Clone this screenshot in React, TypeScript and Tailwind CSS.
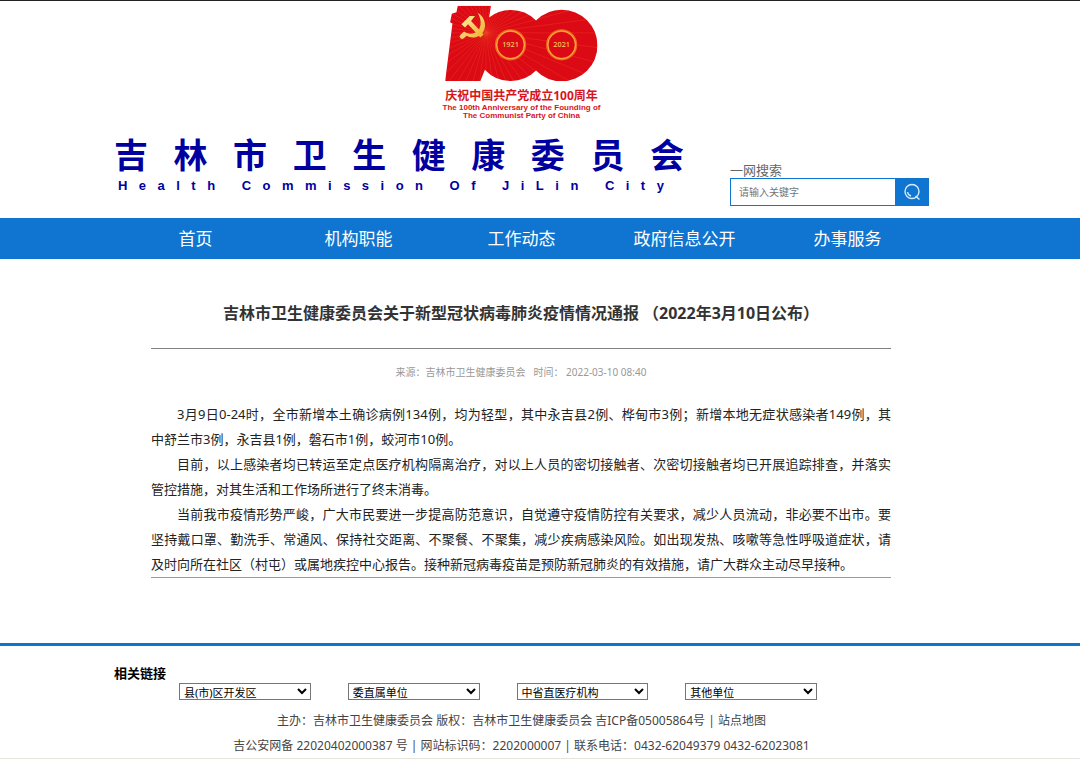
import type { ReactNode } from "react";

const NAV_ITEMS = ["首页", "机构职能", "工作动态", "政府信息公开", "办事服务"];

const LINK_GROUPS = ["县(市)区开发区", "委直属单位", "中省直医疗机构", "其他单位"];

// \u2060 keeps a place name and the character before it on one line.
const PARAGRAPHS = [
  "3月9日0-24时，全市新增本土确诊病例134例，均为轻型，其中永吉县2例、桦甸市3例；新增本地无症状感染者149例，其中\u2060舒兰市3例，永吉县1例，磐石市1例，蛟河市10例。",
  "目前，以上感染者均已转运至定点医疗机构隔离治疗，对以上人员的密切接触者、次密切接触者均已开展追踪排查，并落实管控措施，对其生活和工作场所进行了终末消毒。",
  "当前我市疫情形势严峻，广大市民要进一步提高防范意识，自觉遵守疫情防控有关要求，减少人员流动，非必要不出市。要坚持戴口罩、勤洗手、常通风、保持社交距离、不聚餐、不聚集，减少疾病感染风险。如出现发热、咳嗽等急性呼吸道症状，请及时向所在社区（村屯）或属地疾控中心报告。接种新冠病毒疫苗是预防新冠肺炎的有效措施，请广大群众主动尽早接种。",
];

const RAYS = Array.from({ length: 48 }, (_, i) => {
  const a = (i * Math.PI * 2) / 48;
  return { x: 165 + Math.cos(a) * 400, y: 100 + Math.sin(a) * 400 };
});

function Container({ className = "", children }: { className?: string; children: ReactNode }) {
  return <div className={`mx-auto w-full max-w-[815px] ${className}`}>{children}</div>;
}

// Spreads single characters evenly over the available width.
function Spread({ text, className }: { text: string; className: string }) {
  return (
    <span className={`flex justify-between whitespace-pre ${className}`}>
      {Array.from(text).map((ch, i) => (
        <span key={i}>{ch}</span>
      ))}
    </span>
  );
}

function AnniversaryLogo() {
  return (
    <div className="flex flex-col items-center text-[#d8141c]">
      <svg viewBox="42 16 460 232" className="h-[77px] w-[153px]" aria-hidden="true">
        <defs>
          <clipPath id="hundred">
            <path d="M80 18H180L174 56L166 200L148 245H42L64 72L57 68L62 42L76 38Z" />
            <circle cx="240" cy="138" r="107" />
            <circle cx="393" cy="138" r="108" />
          </clipPath>
          <linearGradient id="gold" x1="0" y1="0" x2="1" y2="1">
            <stop offset="0" stopColor="#fff0a0" />
            <stop offset="1" stopColor="#edb02c" />
          </linearGradient>
        </defs>
        <g clipPath="url(#hundred)">
          <rect x="40" y="14" width="464" height="236" fill="#dc0a14" />
          {RAYS.map((r, i) => (
            <line key={i} x1="165" y1="100" x2={r.x} y2={r.y} stroke="#ef4a2c" strokeWidth="2" opacity="0.5" />
          ))}
        </g>
        {[239, 393].map((cx) => (
          <g key={cx}>
            <circle cx={cx} cy="136" r="43" fill="#dc0a14" stroke="#ef6a1c" strokeWidth="8" />
            <circle cx={cx} cy="136" r="42" fill="none" stroke="#fbb04a" strokeWidth="3" />
            <text
              x={cx}
              y="144"
              textAnchor="middle"
              fill="#f7c860"
              className="font-['Noto_Sans'] text-[22px] font-medium"
            >
              {cx === 239 ? "1921" : "2021"}
            </text>
          </g>
        ))}
        <g fill="url(#gold)">
          <path d="M140 39C164 52 170 86 151 104C138 116 119 117 107 109L98 116A7 7 0 1 1 88 106L99 96C112 106 132 104 142 92C153 78 150 56 140 39Z" />
          <path d="M91 74L116 49H132L120 64L158 105L148 114L111 74L102 84Z" />
        </g>
      </svg>
      <p className="mt-1.5 text-xs leading-4 font-bold whitespace-nowrap">庆祝中国共产党成立100周年</p>
      <p className="text-center font-['Liberation_Sans'] text-[8px] leading-[8px] font-bold whitespace-nowrap">
        The 100th Anniversary of the Founding of
        <br />
        The Communist Party of China
      </p>
    </div>
  );
}

function SearchBox() {
  return (
    <form className="w-[199px]" onSubmit={(e) => e.preventDefault()}>
      <label htmlFor="keyword" className="block text-[13px] leading-4 text-[#666]">
        一网搜索
      </label>
      <div className="flex h-7 border border-[#0f75d0]">
        <input
          id="keyword"
          type="text"
          placeholder="请输入关键字"
          className="min-w-0 flex-1 px-2 text-[10px] outline-none placeholder:text-[#757575]"
        />
        <button type="submit" aria-label="搜索" className="flex w-[33px] items-center justify-center bg-[#0f75d0]">
          <svg viewBox="0 0 18 18" className="size-[18px]" fill="none" stroke="#d9ebfa" strokeWidth="1.4">
            <circle cx="9" cy="8.5" r="7" />
            <path d="M4.5 9A5 5 0 0 0 8 13M12.5 13L16.5 16.5" />
          </svg>
        </button>
      </div>
    </form>
  );
}

export default function App() {
  return (
    <div className="border-t border-[#222] bg-white font-['Noto_Sans','Noto_Sans_CJK_SC',sans-serif] text-[#333]" lang="zh-CN">
      <header className="pt-1 pr-[37px]">
        <AnniversaryLogo />
        <Container className="flex items-end justify-between pt-3 pb-3">
          <h1 className="mb-3 w-[570px] text-[#0000a0]">
            <Spread text="吉林市卫生健康委员会" className="text-[34px] leading-[46px] font-bold" />
            <Spread
              text="Health Commission Of JiLin City"
              className="mr-5 ml-1 font-['Liberation_Sans'] text-[13px] leading-4 font-bold"
            />
          </h1>
          <SearchBox />
        </Container>
      </header>

      <nav className="bg-[#0f75d0] pr-[37px]">
        <Container>
          <ul className="grid grid-cols-5">
            {NAV_ITEMS.map((item) => (
              <li key={item}>
                <a href="#" className="block text-center text-[17px] leading-[41px] text-white">
                  {item}
                </a>
              </li>
            ))}
          </ul>
        </Container>
      </nav>

      <main className="pr-[37px]">
        <Container className="pt-10 pr-[38px] pb-[65px] pl-[37px]">
          <h2 className="pb-[21px] text-center text-base leading-7 font-bold whitespace-pre">
            吉林市卫生健康委员会关于新型冠状病毒肺炎疫情情况通报 （2022年3月10日公布）
          </h2>
          <p className="border-t border-[#808080] pt-[15px] text-center text-[10px] leading-4 text-[#999]">
            来源：吉林市卫生健康委员会 &nbsp; 时间： 2022-03-10 08:40
          </p>
          <article className="mt-[22px] border-b border-[#999] text-justify text-[13px] leading-[25px] text-[#222]">
            {PARAGRAPHS.map((p) => (
              <p key={p} className="indent-[26px]">
                {p}
              </p>
            ))}
          </article>
        </Container>
      </main>

      <footer className="border-t-3 border-b border-t-[#0f75d0] border-b-[#e6e4dc] pr-[37px]">
        <Container className="pt-[17px]">
          <h3 className="text-[13px] leading-5 font-bold text-black">相关链接</h3>
          <div className="grid grid-cols-4 gap-x-[37px] pr-28 pl-[65px]">
            {LINK_GROUPS.map((name) => (
              <select
                key={name}
                aria-label={name}
                className="h-[17px] w-full border border-[#767676] bg-white text-[11px] leading-[15px] text-black"
              >
                <option>{name}</option>
              </select>
            ))}
          </div>
          <div className="mt-2 text-center text-xs leading-[25px] text-[#444]">
            <p>
              主办：吉林市卫生健康委员会 版权：吉林市卫生健康委员会 <a href="#">吉ICP备05005864号</a> |{" "}
              <a href="#">站点地图</a>
            </p>
            <p>
              <a href="#">吉公安网备 22020402000387 号</a> | 网站标识码：2202000007 | 联系电话：0432-62049379 0432-62023081
            </p>
          </div>
        </Container>
      </footer>
    </div>
  );
}
